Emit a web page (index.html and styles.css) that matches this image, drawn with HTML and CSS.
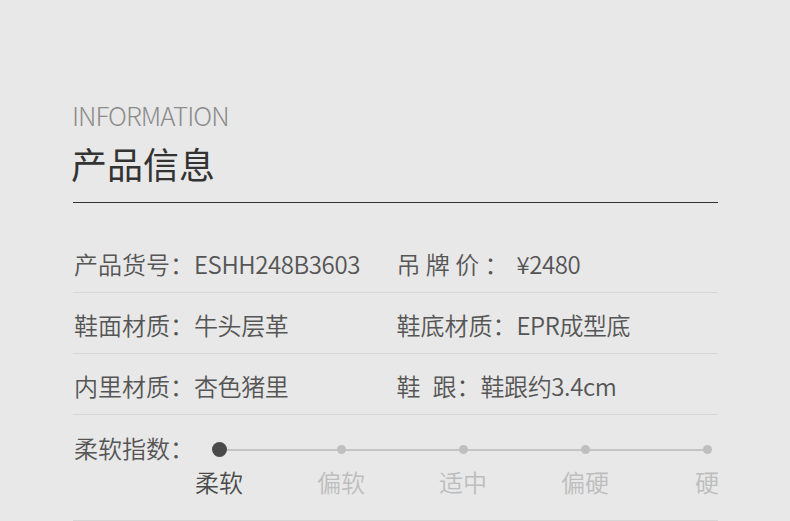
FILE: index.html
```html
<!DOCTYPE html>
<html lang="zh-CN">
<head>
  <meta charset="UTF-8" />
  <meta name="viewport" content="width=device-width, initial-scale=1.0" />
  <title>产品信息</title>
  <link rel="stylesheet" href="styles.css">
</head>
<body>
  <div class="info">
    <div class="heading">
      <div class="heading-en">INFORMATION</div>
      <h2 class="heading-cn">产品信息</h2>
    </div>

    <div class="rows">
      <div class="row">
        <div class="cell"><span class="label">产品货号：</span><span class="value">ESHH248B3603</span></div>
        <div class="cell"><span class="label">吊 牌 价 ：</span><span class="value">¥2480</span></div>
      </div>
      <div class="row">
        <div class="cell"><span class="label">鞋面材质：</span><span class="value">牛头层革</span></div>
        <div class="cell"><span class="label">鞋底材质：</span><span class="value">EPR成型底</span></div>
      </div>
      <div class="row">
        <div class="cell"><span class="label">内里材质：</span><span class="value">杏色猪里</span></div>
        <div class="cell"><span class="label short">鞋&ensp;跟：</span><span class="value">鞋跟约3.4cm</span></div>
      </div>
      <div class="row soft">
        <span class="label">柔软指数：</span>
        <div class="scale">
          <div class="stop active"><i class="dot"></i><span>柔软</span></div>
          <div class="stop"><i class="dot"></i><span>偏软</span></div>
          <div class="stop"><i class="dot"></i><span>适中</span></div>
          <div class="stop"><i class="dot"></i><span>偏硬</span></div>
          <div class="stop"><i class="dot"></i><span>硬</span></div>
        </div>
      </div>
    </div>
  </div>
</body>
</html>
```

FILE: styles.css
```css
body {
  margin: 0;
  background: #e8e8e8;
  font-family: "Noto Sans CJK SC", "Noto Sans", sans-serif;
  color: #555;
}
.info {
  width: 645px;
  margin-left: 73px;
  padding-top: 98px;
}
.heading {
  border-bottom: 1px solid #333;
  padding-bottom: 14px;
}
.heading-en {
  font-size: 26px;
  font-weight: 300;
  line-height: 34px;
  letter-spacing: -1px;
  color: #8c8c8c;
  margin-left: -1px;
}
.heading-cn {
  margin: 6px 0 0;
  font-size: 36px;
  font-weight: 400;
  line-height: 50px;
  color: #333;
  margin-left: -2px;
}
.rows {
  padding-top: 29px;
}
.row {
  display: flex;
  height: 56px;
  padding-top: 4px;
  line-height: 56px;
  font-size: 24px;
  font-weight: 350;
  border-bottom: 1px solid #d6d6d6;
}
.cell {
  width: 324px;
  padding-left: 1px;
}
.label {
  display: inline-block;
  width: 120px;
}
.label.short {
  width: auto;
}
.value {
  letter-spacing: -0.4px;
}
.row.soft {
  height: auto;
  line-height: 26px;
  padding: 20px 0 25px 1px;
}
.scale {
  position: relative;
  display: flex;
  justify-content: space-between;
  width: 488px;
  margin: 7px 0 0 25px;
}
.scale::before {
  content: "";
  position: absolute;
  left: 0;
  right: 0;
  top: 7px;
  height: 2px;
  background: #c4c4c4;
}
.stop {
  width: 0;
  display: flex;
  flex-direction: column;
  align-items: center;
  color: #bdbdbd;
  white-space: nowrap;
}
.dot {
  position: relative;
  width: 9px;
  height: 9px;
  margin: 3px 0;
  border-radius: 50%;
  background: #bfbfbf;
}
.stop span {
  margin-top: 12px;
}
.stop.active {
  color: #4a4a4a;
}
.stop.active .dot {
  width: 15px;
  height: 15px;
  margin: 0;
  background: #4a4a4a;
}
```
